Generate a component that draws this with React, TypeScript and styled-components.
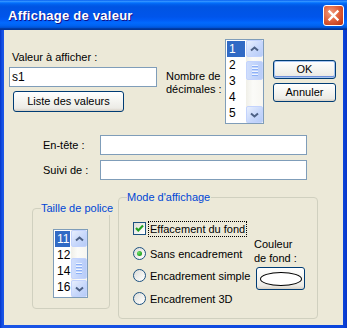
import styled, { createGlobalStyle } from 'styled-components';

const GlobalStyle = createGlobalStyle`
  html, body {
    margin: 0;
    padding: 0;
    background: #ffffff;
  }
  body {
    font-family: 'Liberation Sans', Arial, sans-serif;
    font-size: 11px;
    color: #000000;
  }
`;

const decimals = ['1', '2', '3', '4', '5'];
const sizes = ['11', '12', '14', '16'];

const ArrowIcon = ({ down }: { down?: boolean }) => (
	<svg width="9" height="6" viewBox="0 0 9 6">
		<polyline
			points={down ? '1,1.5 4.5,4.5 8,1.5' : '1,4.5 4.5,1.5 8,4.5'}
			fill="none"
			stroke="#4d6185"
			strokeWidth="2"
		/>
	</svg>
);

const ScrollList = ({
	items,
	width,
	height,
	barWidth,
	thumbTop,
	thumbHeight,
}: {
	items: string[];
	width: number;
	height: number;
	barWidth: number;
	thumbTop: number;
	thumbHeight: number;
}) => (
	<ListBox $w={width} $h={height}>
		<Items>
			{items.map((it, i) => (
				<Item key={it} $selected={i === 0}>
					{it}
				</Item>
			))}
		</Items>
		<ScrollBar $w={barWidth}>
			<ScrollBtn>
				<ArrowIcon />
			</ScrollBtn>
			<Track>
				<Thumb $top={thumbTop} $h={thumbHeight}>
					<Grip />
					<Grip />
					<Grip />
					<Grip />
				</Thumb>
			</Track>
			<ScrollBtn>
				<ArrowIcon down />
			</ScrollBtn>
		</ScrollBar>
	</ListBox>
);

const App = () => {
	return (
		<>
			<GlobalStyle />
			<Window>
				<TitleBar>
					<Title>Affichage de valeur</Title>
					<CloseBtn>
						<svg width="19" height="19" viewBox="0 0 19 19">
							<path d="M5.5 5.5 L13.5 13.5 M13.5 5.5 L5.5 13.5" stroke="#ffffff" strokeWidth="2.4" strokeLinecap="square" />
						</svg>
					</CloseBtn>
				</TitleBar>
				<Frame>
					<Client>
						<TopSection>
							<ValueCol>
								<FieldLabel>Valeur à afficher :</FieldLabel>
								<TextInput $w={148} defaultValue="s1" />
								<XpButton $w={111} $h={21} $ml={4} $mt={4}>
									Liste des valeurs
								</XpButton>
							</ValueCol>
							<DecLabel>
								Nombre de
								<br />
								décimales :
							</DecLabel>
							<DecListWrap>
								<ScrollList items={decimals} width={39} height={85} barWidth={17} thumbTop={4} thumbHeight={19} />
							</DecListWrap>
							<ButtonCol>
								<XpButton $w={63} $h={19} $default>
									OK
								</XpButton>
								<XpButton $w={63} $h={19}>
									Annuler
								</XpButton>
							</ButtonCol>
						</TopSection>

						<Fields>
							<FieldRow>
								<RowLabel>En-tête :</RowLabel>
								<TextInput $w={207} />
							</FieldRow>
							<FieldRow>
								<RowLabel>Suivi de :</RowLabel>
								<TextInput $w={207} />
							</FieldRow>
						</Fields>

						<Groups>
							<GroupBox $w={78} $h={101} $mt={28} $ml={28}>
								<Caption>Taille de police</Caption>
								<SizeListWrap>
									<ScrollList items={sizes} width={35} height={69} barWidth={16} thumbTop={11} thumbHeight={21} />
								</SizeListWrap>
							</GroupBox>
							<GroupBox $w={200} $h={122} $mt={17} $ml={8}>
								<Caption>Mode d'affichage</Caption>
								<ModeBody>
									<Options>
										<OptionRow $mt={0}>
											<CheckBox>
												<svg width="11" height="11" viewBox="0 0 11 11">
													<polyline points="2,5 4.3,7.4 9,2.6" fill="none" stroke="#21a121" strokeWidth="2.2" />
												</svg>
											</CheckBox>
											<OptionLabel $focused>Effacement du fond</OptionLabel>
										</OptionRow>
										<OptionRow $mt={12}>
											<Radio $checked />
											<OptionLabel>Sans encadrement</OptionLabel>
										</OptionRow>
										<OptionRow $mt={9}>
											<Radio />
											<OptionLabel>Encadrement simple</OptionLabel>
										</OptionRow>
										<OptionRow $mt={10}>
											<Radio />
											<OptionLabel>Encadrement 3D</OptionLabel>
										</OptionRow>
									</Options>
									<ColorCol>
										<ColorLabel>
											Couleur
											<br />
											de fond :
										</ColorLabel>
										<ColorButton>
											<Swatch />
										</ColorButton>
									</ColorCol>
								</ModeBody>
							</GroupBox>
						</Groups>
					</Client>
				</Frame>
			</Window>
		</>
	);
};
export default App;

const Window = styled.div`
	width: 347px;
	height: 328px;
	display: flex;
	flex-direction: column;
	overflow: hidden;
	background: #0a45dc;
`;

const TitleBar = styled.div`
	height: 30px;
	flex: none;
	display: flex;
	align-items: center;
	justify-content: space-between;
	padding: 0 3px 0 8px;
	box-sizing: border-box;
	background: linear-gradient(
		180deg,
		#0058ee 0%,
		#3593ff 4%,
		#288eff 6%,
		#127dff 8%,
		#036ffc 10%,
		#0262ee 14%,
		#0057e5 20%,
		#0054e3 24%,
		#0055eb 56%,
		#005bf5 66%,
		#026afe 76%,
		#0062ef 86%,
		#0052d6 92%,
		#0040ab 94%,
		#003092 100%
	);
`;

const Title = styled.div`
	color: #ffffff;
	font-family: 'Liberation Sans', Arial, sans-serif;
	font-weight: 700;
	font-size: 13px;
	letter-spacing: 0.25px;
	text-shadow: 1px 1px #0f1089;
	padding-top: 1px;
`;

const CloseBtn = styled.div`
	width: 21px;
	height: 21px;
	box-sizing: border-box;
	border: 1px solid #ffffff;
	border-radius: 3px;
	margin-top: 1px;
	background: radial-gradient(circle at 35% 35%, #f19c80 0%, #e2643f 45%, #c9421f 80%, #b43312 100%);
	display: flex;
	align-items: center;
	justify-content: center;
`;

const Frame = styled.div`
	flex: 1;
	display: flex;
	padding: 0 4px 3px 4px;
	background: linear-gradient(90deg, #0831c0 0, #0a45dc 1px, #1a55e6 3px, #0a45dc 343px, #0935c8 347px);
`;

const Client = styled.div`
	flex: 1;
	background: #ece9d8;
	display: flex;
	flex-direction: column;
`;

const TopSection = styled.div`
	display: flex;
	align-items: flex-start;
	height: 94px;
`;

const ValueCol = styled.div`
	margin-left: 5px;
	width: 148px;
	display: flex;
	flex-direction: column;
	align-items: flex-start;
`;

const FieldLabel = styled.div`
	margin-top: 21px;
	padding-left: 3px;
	line-height: 13px;
	white-space: nowrap;
`;

const TextInput = styled.input<{ $w: number }>`
	width: ${(p) => p.$w}px;
	height: 20px;
	box-sizing: border-box;
	margin: 3px 0 0 0;
	border: 1px solid #7f9db9;
	background: #ffffff;
	padding: 0 2px;
	font-family: 'Liberation Sans', Arial, sans-serif;
	font-size: 12px;
	color: #000000;
	outline: none;
`;

const XpButton = styled.div<{ $w: number; $h: number; $ml?: number; $mt?: number; $default?: boolean }>`
	width: ${(p) => p.$w}px;
	height: ${(p) => p.$h}px;
	margin-left: ${(p) => p.$ml ?? 0}px;
	margin-top: ${(p) => p.$mt ?? 0}px;
	box-sizing: border-box;
	border: 1px solid #003c74;
	border-radius: 3px;
	background: linear-gradient(180deg, #ffffff 0%, #f4f4f0 50%, #ecebe6 85%, #d6d0c5 100%);
	box-shadow: ${(p) => (p.$default ? 'inset 0 0 0 1px #a6c4f0, inset 0 -1px 0 1px #6d8fdb' : 'none')};
	display: flex;
	align-items: center;
	justify-content: center;
	white-space: nowrap;
	font-size: 11px;
	line-height: 13px;
`;

const DecLabel = styled.div`
	margin-left: 9px;
	margin-top: 40px;
	width: 59px;
	line-height: 13px;
	white-space: nowrap;
`;

const DecListWrap = styled.div`
	margin-top: 9px;
`;

const ButtonCol = styled.div`
	margin-left: 9px;
	margin-top: 30px;
	display: flex;
	flex-direction: column;
	gap: 4px;
`;

const ListBox = styled.div<{ $w: number; $h: number }>`
	width: ${(p) => p.$w}px;
	height: ${(p) => p.$h}px;
	box-sizing: border-box;
	border: 1px solid #7f9db9;
	background: #ffffff;
	display: flex;
`;

const Items = styled.div`
	flex: 1;
	padding: 1px 1px 0 1px;
	overflow: hidden;
`;

const Item = styled.div<{ $selected?: boolean }>`
	height: 16px;
	line-height: 16px;
	padding-left: 2px;
	font-size: 12px;
	background: ${(p) => (p.$selected ? '#316ac5' : 'transparent')};
	color: ${(p) => (p.$selected ? '#ffffff' : '#000000')};
`;

const ScrollBar = styled.div<{ $w: number }>`
	width: ${(p) => p.$w}px;
	flex: none;
	display: flex;
	flex-direction: column;
	background: linear-gradient(90deg, #f0efe8 0%, #fbfbf8 40%, #f7f6f1 100%);
`;

const ScrollBtn = styled.div`
	height: 17px;
	flex: none;
	box-sizing: border-box;
	border: 1px solid #c3d3fd;
	border-radius: 2px;
	background: linear-gradient(135deg, #e8effd 0%, #c8d8fb 55%, #b6cbf7 100%);
	display: flex;
	align-items: center;
	justify-content: center;
`;

const Track = styled.div`
	flex: 1;
`;

const Thumb = styled.div<{ $top: number; $h: number }>`
	margin-top: ${(p) => p.$top}px;
	height: ${(p) => p.$h}px;
	box-sizing: border-box;
	border: 1px solid #c3d3fd;
	border-radius: 2px;
	background: linear-gradient(90deg, #d0defc 0%, #c2d4fb 50%, #b8ccf8 100%);
	display: flex;
	flex-direction: column;
	align-items: center;
	justify-content: center;
	gap: 1px;
`;

const Grip = styled.div`
	width: 6px;
	height: 1px;
	background: #eef4fe;
	box-shadow: 0 1px 0 #8cb0f8;
	margin-bottom: 1px;
`;

const Fields = styled.div`
	margin-top: 11px;
	display: flex;
	flex-direction: column;
	gap: 5px;
`;

const FieldRow = styled.div`
	display: grid;
	grid-template-columns: 57px 207px;
	align-items: center;
	padding-left: 39px;

	& > input {
		margin: 0;
	}
`;

const RowLabel = styled.div`
	line-height: 13px;
	white-space: nowrap;
`;

const Groups = styled.div`
	display: flex;
	align-items: flex-start;
`;

const GroupBox = styled.div<{ $w: number; $h: number; $mt: number; $ml: number }>`
	position: relative;
	width: ${(p) => p.$w}px;
	height: ${(p) => p.$h}px;
	margin-top: ${(p) => p.$mt}px;
	margin-left: ${(p) => p.$ml}px;
	box-sizing: border-box;
	border: 1px solid #d0d0bf;
	border-radius: 4px;
`;

const Caption = styled.div`
	position: absolute;
	top: -8px;
	left: 8px;
	padding: 0 1px 0 0;
	background: #ece9d8;
	color: #0046d5;
	line-height: 14px;
	white-space: nowrap;
`;

const SizeListWrap = styled.div`
	padding: 20px 0 0 20px;
`;

const ModeBody = styled.div`
	display: flex;
	align-items: flex-start;
`;

const Options = styled.div`
	width: 121px;
	padding: 24px 0 0 14px;
	display: flex;
	flex-direction: column;
`;

const OptionRow = styled.div<{ $mt: number }>`
	display: flex;
	align-items: center;
	height: 13px;
	margin-top: ${(p) => p.$mt}px;
`;

const CheckBox = styled.div`
	width: 13px;
	height: 13px;
	flex: none;
	box-sizing: border-box;
	border: 1px solid #1c5180;
	background: linear-gradient(135deg, #dcdcd7 0%, #f6f6f4 70%, #ffffff 100%);
	display: flex;
	align-items: center;
	justify-content: center;
`;

const Radio = styled.div<{ $checked?: boolean }>`
	width: 13px;
	height: 13px;
	flex: none;
	box-sizing: border-box;
	border: 1px solid #1c5180;
	border-radius: 50%;
	background: linear-gradient(135deg, #dcdcd7 0%, #f6f6f4 70%, #ffffff 100%);
	display: flex;
	align-items: center;
	justify-content: center;

	&::after {
		content: '';
		display: ${(p) => (p.$checked ? 'block' : 'none')};
		width: 5px;
		height: 5px;
		border-radius: 50%;
		background: radial-gradient(circle at 35% 35%, #6fe06a 0%, #2aa82a 60%, #1b8d1b 100%);
	}
`;

const OptionLabel = styled.div<{ $focused?: boolean }>`
	margin-left: 3px;
	padding: 1px 1px 0 1px;
	line-height: 13px;
	white-space: nowrap;
	outline: ${(p) => (p.$focused ? '1px dotted #000000' : 'none')};
`;

const ColorCol = styled.div`
	padding-top: 39px;
	display: flex;
	flex-direction: column;
	align-items: flex-start;
`;

const ColorLabel = styled.div`
	line-height: 14px;
	white-space: nowrap;
`;

const ColorButton = styled.div`
	margin: 2px 0 0 2px;
	width: 49px;
	height: 23px;
	box-sizing: border-box;
	border: 1px solid #003c74;
	border-radius: 3px;
	background: linear-gradient(180deg, #ffffff 0%, #f4f4f0 50%, #ecebe6 85%, #d6d0c5 100%);
	display: flex;
	align-items: center;
	justify-content: center;
`;

const Swatch = styled.div`
	width: 42px;
	height: 14px;
	box-sizing: border-box;
	border: 1px solid #000000;
	border-radius: 50%;
	background: #ffffff;
`;
